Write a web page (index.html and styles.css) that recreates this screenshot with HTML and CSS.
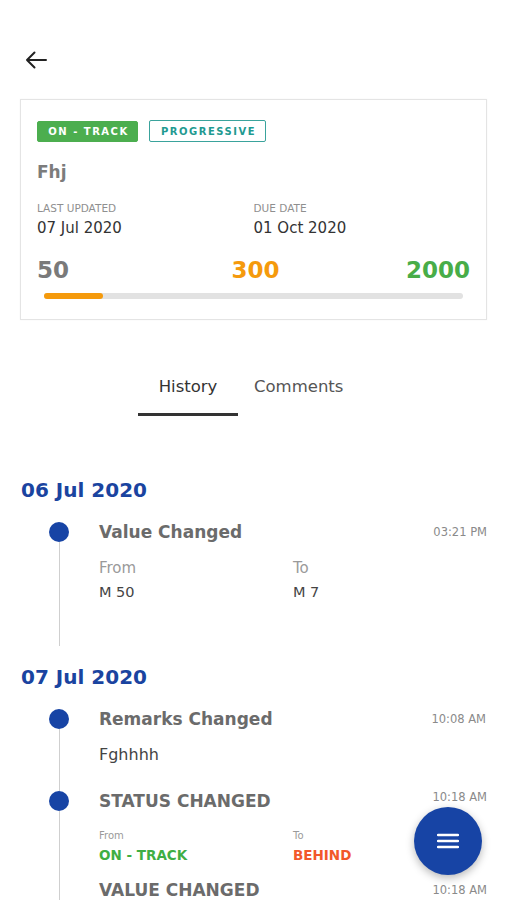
FILE: index.html
```html
<!DOCTYPE html>
<html>
<head>
<meta charset="utf-8">
<link rel="stylesheet" href="styles.css">
</head>
<body>
<div class="topbar">
  <svg class="back" width="22" height="18" viewBox="0 0 22 18"><path d="M21 9H2M9.5 1.5L2 9l7.5 7.5" fill="none" stroke="#222" stroke-width="2" stroke-linecap="round" stroke-linejoin="round"/></svg>
</div>

<div class="card">
  <div class="badges">
    <span class="badge badge-green">ON - TRACK</span>
    <span class="badge badge-outline">PROGRESSIVE</span>
  </div>
  <div class="name">Fhj</div>
  <div class="dates">
    <div class="date-col">
      <div class="label">LAST UPDATED</div>
      <div class="value">07 Jul 2020</div>
    </div>
    <div class="date-col">
      <div class="label">DUE DATE</div>
      <div class="value">01 Oct 2020</div>
    </div>
  </div>
  <div class="nums">
    <span class="num num-start">50</span>
    <span class="num num-cur">300</span>
    <span class="num num-target">2000</span>
  </div>
  <div class="bar"><div class="bar-fill" style="width:14%"></div></div>
</div>

<div class="tabs">
  <div class="tab active">History</div>
  <div class="tab">Comments</div>
</div>

<div class="day">
  <div class="day-title">06 Jul 2020</div>
  <div class="entry">
    <div class="rail"><span class="dot"></span><span class="line"></span></div>
    <div class="content content-tall">
      <div class="head"><span class="title">Value Changed</span><span class="time">03:21 PM</span></div>
      <div class="fromto">
        <div class="ft-col"><div class="ft-label">From</div><div class="ft-val">M 50</div></div>
        <div class="ft-col"><div class="ft-label">To</div><div class="ft-val">M 7</div></div>
      </div>
    </div>
  </div>
</div>

<div class="day">
  <div class="day-title">07 Jul 2020</div>
  <div class="entry">
    <div class="rail"><span class="dot"></span><span class="line"></span></div>
    <div class="content content-mid">
      <div class="head"><span class="title">Remarks Changed</span><span class="time">10:08 AM</span></div>
      <div class="remark">Fghhhh</div>
    </div>
  </div>
  <div class="entry">
    <div class="rail"><span class="dot"></span><span class="line"></span></div>
    <div class="content">
      <div class="head"><span class="title">STATUS CHANGED</span><span class="time time-up">10:18 AM</span></div>
      <div class="fromto small">
        <div class="ft-col"><div class="ft-label">From</div><div class="ft-val green">ON - TRACK</div></div>
        <div class="ft-col"><div class="ft-label">To</div><div class="ft-val red">BEHIND</div></div>
      </div>
      <div class="head head-next"><span class="title">VALUE CHANGED</span><span class="time">10:18 AM</span></div>
    </div>
  </div>
</div>

<button class="fab">
  <svg width="22" height="16" viewBox="0 0 22 16"><path d="M1 2h20M1 8h20M1 14h20" stroke="#fff" stroke-width="2.4" stroke-linecap="round"/></svg>
</button>
</body>
</html>
```

FILE: styles.css
```css
* { box-sizing: border-box; }
html, body { margin: 0; padding: 0; background: #fff; }
body {
  font-family: "DejaVu Sans", "Open Sans", sans-serif;
  color: #333;
  width: 507px;
  height: 900px;
  overflow: hidden;
}
.topbar {
  height: 99px;
  padding: 51px 0 0 25px;
}
.back { display: block; }

.card {
  margin: 0 20px;
  border: 1px solid #e4e4e4;
  padding: 20px 16px 20px 16px;
  box-shadow: 0 0 2px rgba(0,0,0,0.04);
}
.badges { display: flex; gap: 11px; align-items: center; }
.badge {
  display: inline-flex;
  align-items: center;
  justify-content: center;
  height: 21px;
  font-size: 10px;
  font-weight: 700;
  letter-spacing: 1.5px;
  border-radius: 2px;
  padding: 0 0 0 2px;
}
.badge-green { background: #4cae4f; color: #fff; width: 101px; border: 1px solid #4cae4f; }
.badge-outline { border: 1.5px solid #3aa39c; color: #1f9a91; width: 117px; height: 22px; }
.name {
  margin-top: 18px;
  font-size: 17px;
  font-weight: 700;
  color: #7c7c7c;
  line-height: 24px;
}
.dates { display: flex; margin-top: 18px; }
.date-col { width: 217px; }
.label { font-size: 10.5px; color: #8f8f8f; line-height: 13px; }
.value { font-size: 15px; color: #333; line-height: 20px; margin-top: 3px; }
.nums {
  display: flex;
  justify-content: space-between;
  margin-top: 18px;
  line-height: 28px;
}
.num { font-size: 23px; font-weight: 700; }
.num-start { color: #7a7a7a; }
.num-cur { color: #f59a0c; margin-left: 36px; }
.num-target { color: #48ad48; }
.bar {
  margin: 9px 7px 0 7px;
  height: 6px;
  border-radius: 3px;
  background: #e2e2e2;
}
.bar-fill { height: 100%; border-radius: 3px; background: #f59a0c; }

.tabs {
  display: flex;
  gap: 16px;
  padding-left: 138px;
  margin-top: 56px;
}
.tab {
  width: 100px;
  text-align: center;
  font-size: 16.5px;
  color: #555;
  line-height: 22px;
  padding-bottom: 15px;
  border-bottom: 3px solid transparent;
}
.tab:last-child { width: auto; }
.tab.active { color: #333; border-bottom-color: #333; }

.day-title {
  font-size: 20px;
  font-weight: 700;
  color: #1a44a0;
  padding-left: 21px;
  line-height: 26px;
  margin-bottom: 19px;
}
.tabs + .day { margin-top: 61px; }
.day + .day { margin-top: 18px; }

.entry { display: flex; }
.rail {
  width: 20px;
  margin-left: 49px;
  display: flex;
  flex-direction: column;
  align-items: center;
  flex-shrink: 0;
}
.dot { width: 20px; height: 20px; border-radius: 50%; background: #1744a5; flex-shrink: 0; }
.line { width: 1px; flex: 1; background: #cfcfcf; }
.content { flex: 1; margin-left: 30px; padding-right: 21px; padding-bottom: 12px; }
.content-tall { padding-bottom: 45px; }
.content-mid { padding-bottom: 25px; }
.head {
  display: flex;
  justify-content: space-between;
  align-items: center;
  line-height: 20px;
}
.title { font-size: 17px; font-weight: 700; color: #6b6b6b; }
.time { font-size: 11.5px; color: #8a8a8a; }
.time-up { position: relative; top: -4px; }
.fromto { display: flex; margin-top: 17px; }
.ft-col { width: 194px; }
.ft-label { font-size: 15px; color: #9a9a9a; line-height: 18px; }
.ft-val { font-size: 14.5px; color: #444; line-height: 18px; margin-top: 6px; }
.remark { font-size: 16px; color: #444; margin-top: 15px; line-height: 22px; }
.fromto.small { margin-top: 18px; }
.fromto.small .ft-label { font-size: 10px; line-height: 13px; }
.fromto.small .ft-val { font-size: 13.5px; font-weight: 700; margin-top: 4px; }
.green { color: #3fae43 !important; }
.red { color: #f2582a !important; }
.head-next { margin-top: 16px; }

.fab {
  position: fixed;
  left: 414px;
  top: 807px;
  width: 68px;
  height: 68px;
  border-radius: 50%;
  border: none;
  background: #1744a5;
  box-shadow: 0 3px 8px rgba(0,0,0,0.28);
  display: flex;
  align-items: center;
  justify-content: center;
  padding: 0;
}
```
